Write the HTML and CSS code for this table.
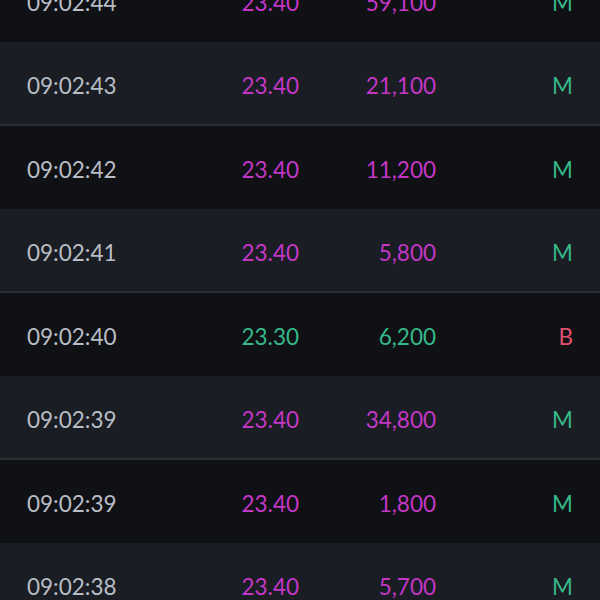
FILE: index.html
```html
<!DOCTYPE html>
<html>
<head>
<meta charset="utf-8">
<link rel="stylesheet" href="styles.css">
</head>
<body>
<div class="list">
  <div class="row dark"><span class="time">09:02:44</span><span class="price up">23.40</span><span class="vol up">59,100</span><span class="side m">M</span></div>
  <div class="row light"><span class="time">09:02:43</span><span class="price up">23.40</span><span class="vol up">21,100</span><span class="side m">M</span></div>
  <div class="row dark"><span class="time">09:02:42</span><span class="price up">23.40</span><span class="vol up">11,200</span><span class="side m">M</span></div>
  <div class="row light"><span class="time">09:02:41</span><span class="price up">23.40</span><span class="vol up">5,800</span><span class="side m">M</span></div>
  <div class="row dark"><span class="time">09:02:40</span><span class="price down">23.30</span><span class="vol down">6,200</span><span class="side b">B</span></div>
  <div class="row light"><span class="time">09:02:39</span><span class="price up">23.40</span><span class="vol up">34,800</span><span class="side m">M</span></div>
  <div class="row dark"><span class="time">09:02:39</span><span class="price up">23.40</span><span class="vol up">1,800</span><span class="side m">M</span></div>
  <div class="row light"><span class="time">09:02:38</span><span class="price up">23.40</span><span class="vol up">5,700</span><span class="side m">M</span></div>
</div>
</body>
</html>
```
FILE: styles.css
```css
html, body {
  margin: 0;
  padding: 0;
  background: #0f1115;
  width: 600px;
  height: 600px;
  overflow: hidden;
}
.list {
  margin-top: -41px;
  font-family: Lato, "Open Sans", sans-serif;
  font-size: 22.5px;
}
.row {
  display: grid;
  grid-template-columns: 172px 100px 137px 137px;
  align-items: center;
  padding: 4px 27px 0 27px;
  box-sizing: border-box;
}
.row.dark {
  height: 83px;
  background: #0f1115;
}
.row.light {
  height: 84px;
  background: #1a1d23;
  border-bottom: 2px solid #2a2f36;
}
.time { color: #b9bdc5; }
.price, .vol, .side { text-align: right; }
.up { color: #c437c6; }
.down { color: #36b98b; }
.side.m { color: #36b98b; }
.side.b { color: #e0506c; }
```
